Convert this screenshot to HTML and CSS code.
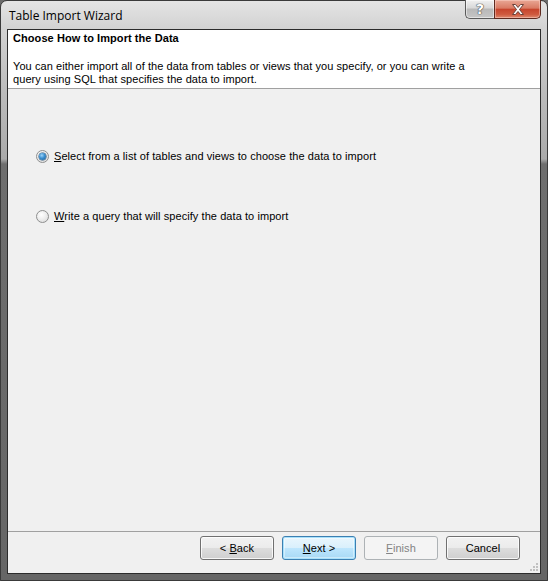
FILE: index.html
```html
<!DOCTYPE html>
<html>
<head>
<meta charset="utf-8">
<title>Table Import Wizard</title>
<link rel="stylesheet" href="styles.css">
</head>
<body>
<div class="window">
  <div class="titlebar">
    <span class="caption">Table Import Wizard</span>
    <div class="caption-buttons">
      <div class="cbtn help"><span class="qmark">?</span></div>
      <div class="cbtn close">
        <svg width="14" height="11" viewBox="0 0 14 11"><path d="M1.5 0.5h3l2.5 3 2.5-3h3l-4 5 4 5h-3l-2.5-3-2.5 3h-3l4-5z" fill="#fff" stroke="#6a4038" stroke-width="1" stroke-linejoin="round"/></svg>
      </div>
    </div>
  </div>
  <div class="client">
    <div class="header">
      <div class="htitle">Choose How to Import the Data</div>
      <div class="hdesc">You can either import all of the data from tables or views that you specify, or you can write a<br>query using SQL that specifies the data to import.</div>
    </div>
    <div class="main">
      <div class="radio-row">
        <span class="radio checked"></span>
        <span class="rlabel"><u>S</u>elect from a list of tables and views to choose the data to import</span>
      </div>
      <div class="radio-row second">
        <span class="radio"></span>
        <span class="rlabel"><u>W</u>rite a query that will specify the data to import</span>
      </div>
    </div>
    <div class="footer">
      <div class="btn"><span>&lt; <u>B</u>ack</span></div>
      <div class="btn default"><span><u>N</u>ext &gt;</span></div>
      <div class="btn disabled"><span><u>F</u>inish</span></div>
      <div class="btn"><span>Cancel</span></div>
      <svg class="grip" width="10" height="10" viewBox="0 0 10 10">
        <g fill="#c0c0c0"><rect x="7" y="1" width="2" height="2"/><rect x="4" y="4" width="2" height="2"/><rect x="7" y="4" width="2" height="2"/><rect x="1" y="7" width="2" height="2"/><rect x="4" y="7" width="2" height="2"/><rect x="7" y="7" width="2" height="2"/></g>
      </svg>
    </div>
  </div>
</div>
</body>
</html>
```
FILE: styles.css
```css
html, body {
  margin: 0;
  padding: 0;
  background: #6a6a6a;
}

.window {
  width: 548px;
  height: 581px;
  box-sizing: border-box;
  border: 1px solid #3a3a3a;
  border-radius: 7px 7px 0 0;
  padding: 0 6px 6px;
  display: flex;
  flex-direction: column;
  background: linear-gradient(to bottom, #e4e4e4 0px, #d2d2d2 28px, #bcbcbc 90px, #aaaaaa 158px, #6e6e6e 163px, #666666 100%);
  font-family: "Liberation Sans", Arial, sans-serif;
}

.titlebar {
  height: 28px;
  display: flex;
  align-items: center;
  flex: none;
}

.caption {
  padding-left: 2px;
  font-family: "Open Sans", "Liberation Sans", sans-serif;
  font-size: 12px;
  color: #000;
  margin-top: 1px;
}

.caption-buttons {
  margin-left: auto;
  align-self: flex-start;
  margin-top: -1px;
  display: flex;
}

.cbtn {
  height: 19px;
  box-sizing: border-box;
  display: flex;
  align-items: center;
  justify-content: center;
  border: 1px solid #5a5a5a;
  border-top: none;
}

.help {
  width: 29px;
  border-radius: 0 0 0 5px;
  border-right: none;
  background: linear-gradient(to bottom, #f0f0f0 0%, #d8d8d8 45%, #b8b8b8 50%, #c6c6c6 100%);
  box-shadow: inset 0 0 0 1px rgba(255,255,255,0.5);
}

.qmark {
  font-family: "DejaVu Sans", sans-serif;
  font-weight: bold;
  font-size: 14px;
  color: #fff;
  text-shadow: 0 0 1px #444, 0 0 1px #444, 0 0 1px #444;
}

.close {
  width: 47px;
  border-radius: 0 0 5px 0;
  border-color: #5e2a20;
  background: linear-gradient(to bottom, #e9a795 0%, #d97b64 45%, #c7452d 52%, #cf5a3f 80%, #de8a70 100%);
  box-shadow: inset 0 0 0 1px rgba(255,220,210,0.45);
}

.client {
  flex: 1;
  display: flex;
  flex-direction: column;
  border: 1px solid #2c2c2c;
  background: #f0f0f0;
  font-size: 11px;
  color: #000;
  line-height: 13px;
  letter-spacing: 0.07px;
}

.header {
  background: #fff;
  border-bottom: 1px solid #a0a0a0;
  padding: 2px 5px;
  height: 54px;
  flex: none;
}

.htitle {
  font-weight: bold;
}

.hdesc {
  margin-top: 15px;
}

.main {
  flex: 1;
  padding: 61px 0 0 28px;
}

.radio-row {
  display: flex;
  align-items: center;
  height: 13px;
}

.radio-row.second {
  margin-top: 47px;
}

.radio {
  width: 13px;
  height: 13px;
  box-sizing: border-box;
  border-radius: 50%;
  border: 1px solid #8e8f8f;
  background: radial-gradient(circle at 40% 35%, #ffffff 0%, #f0f0f0 40%, #d6d6d6 100%);
  margin-right: 5px;
  position: relative;
  flex: none;
}

.radio.checked::after {
  content: "";
  position: absolute;
  left: 2px;
  top: 2px;
  width: 7px;
  height: 7px;
  border-radius: 50%;
  background: radial-gradient(circle at 40% 35%, #9ed4f8 0%, #3b8fd0 45%, #1c5a8e 100%);
  box-shadow: 0 0 0 0.5px #214d72;
}

.footer {
  flex: none;
  height: 42px;
  box-sizing: border-box;
  border-top: 1px solid #a0a0a0;
  padding: 4px 20px 0 0;
  display: flex;
  justify-content: flex-end;
  align-items: flex-start;
  gap: 8px;
  position: relative;
}

.btn {
  width: 74px;
  height: 24px;
  box-sizing: border-box;
  border: 1px solid #707070;
  border-radius: 3px;
  background: linear-gradient(to bottom, #f2f2f2 0%, #ebebeb 50%, #dddddd 51%, #cfcfcf 100%);
  box-shadow: inset 0 0 0 1px rgba(255,255,255,0.8);
  display: flex;
  align-items: center;
  justify-content: center;
  font-size: 11px;
}

.btn.default {
  border-color: #3c7fb1;
  background: linear-gradient(to bottom, #eaf6fd 0%, #d9f0fc 50%, #bee6fd 51%, #a7d9f5 100%);
  box-shadow: inset 0 0 0 1px #a8e1fc, inset 0 0 0 2px rgba(255,255,255,0.4);
}

.btn.disabled {
  border-color: #adb2b5;
  background: #f4f4f4;
  box-shadow: none;
  color: #838383;
}

.grip {
  position: absolute;
  right: 1px;
  bottom: 1px;
}
```
